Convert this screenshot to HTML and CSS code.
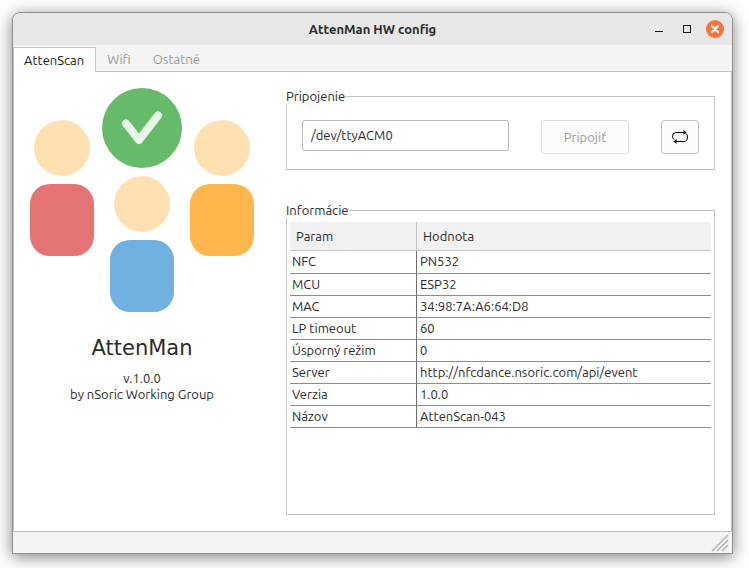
FILE: index.html
```
<!DOCTYPE html>
<html lang="sk">
<head>
  <meta charset="UTF-8">
  <title>AttenMan HW config</title>
  <link rel="stylesheet" href="styles.css">
</head>
<body>

  <div class="window">
    <header class="titlebar">
      <h1>AttenMan HW config</h1>
      <div class="window-buttons">
        <button class="win-btn" type="button" aria-label="Minimalizovať">
          <svg width="18" height="18" viewBox="0 0 18 18"><path d="M5 11.5h8" stroke="#1a1a1a" fill="none"/></svg>
        </button>
        <button class="win-btn" type="button" aria-label="Maximalizovať">
          <svg width="18" height="18" viewBox="0 0 18 18"><rect x="5.5" y="5.5" width="7" height="7" stroke="#1a1a1a" fill="none"/></svg>
        </button>
        <button class="win-btn" type="button" aria-label="Zavrieť">
          <svg width="18" height="18" viewBox="0 0 18 18"><circle cx="9" cy="9" r="9" fill="#ff7139"/><path d="M6 6l6 6M12 6l-6 6" stroke="#fff" stroke-width="2.4" stroke-linecap="round"/></svg>
        </button>
      </div>
    </header>

    <nav class="tabs">
      <button class="tab active" type="button">AttenScan</button>
      <button class="tab" type="button">Wifi</button>
      <button class="tab" type="button">Ostatné</button>
    </nav>

    <main class="page">
      <section class="about">
        <svg class="logo" viewBox="0 0 224 224" aria-hidden="true">
          <circle cx="112" cy="40" r="40" fill="#66bb6a"/>
          <path d="M96 35.5l13 16.5 19-24.5" fill="none" stroke="#e8f5e9" stroke-width="8" stroke-linecap="round" stroke-linejoin="round"/>
          <g fill="#ffe0b2">
            <circle cx="32" cy="60" r="28"/>
            <circle cx="192" cy="60" r="28"/>
            <circle cx="112" cy="116" r="28"/>
          </g>
          <rect x="0" y="96" width="64" height="72" rx="20" fill="#e57373"/>
          <rect x="160" y="96" width="64" height="72" rx="20" fill="#ffb74d"/>
          <rect x="80" y="152" width="64" height="72" rx="20" fill="#70b1e2"/>
        </svg>
        <h2>AttenMan</h2>
        <p>v.1.0.0<br>by nSoric Working Group</p>
      </section>

      <section class="device">
        <fieldset class="group">
          <legend>Pripojenie</legend>
          <div class="connect">
            <input class="port" type="text" value="/dev/ttyACM0" aria-label="Port">
            <button class="btn" type="button" disabled>Pripojiť</button>
            <button class="btn btn-icon" type="button" aria-label="Obnoviť">
              <svg width="18" height="16" viewBox="0 0 18 16">
                <path d="M3 10.5Q1.500 9.500 1.500 7.500Q1.500 3.500 5 3.500H13M15 4.500Q16.500 5.500 16.500 8Q16.500 12.500 13 12.500H5" fill="none" stroke="#000"/>
                <path d="M12.500 1L15.500 3.500L12.500 6zM5.500 10L2.500 12.500L5.500 15z"/>
              </svg>
            </button>
          </div>
        </fieldset>

        <fieldset class="group group-info">
          <legend>Informácie</legend>
          <table>
            <thead>
              <tr><th>Param</th><th>Hodnota</th></tr>
            </thead>
            <tbody>
              <tr><td>NFC</td><td>PN532</td></tr>
              <tr><td>MCU</td><td>ESP32</td></tr>
              <tr><td>MAC</td><td>34:98:7A:A6:64:D8</td></tr>
              <tr><td>LP timeout</td><td>60</td></tr>
              <tr><td>Úsporný režim</td><td>0</td></tr>
              <tr><td>Server</td><td>http://nfcdance.nsoric.com/api/event</td></tr>
              <tr><td>Verzia</td><td>1.0.0</td></tr>
              <tr><td>Názov</td><td>AttenScan-043</td></tr>
            </tbody>
          </table>
        </fieldset>
      </section>
    </main>

    <footer class="statusbar">
      <svg width="18" height="18" viewBox="0 0 18 18" aria-hidden="true"><path d="M1 17L17 1M6 17L17 6M11 17l6-6" stroke="#b0b0b0" stroke-width="1.5"/></svg>
    </footer>
  </div>

</body>
</html>
```
FILE: styles.css
```
* {
  box-sizing: border-box;
}

body {
  margin: 0;
  padding: 12px 16px 14px 12px;
  min-height: 100vh;
  display: flex;
  background: #fff;
  color: #2b2b2b;
  font-family: Ubuntu, "Noto Sans", sans-serif;
  font-size: 13px;
  line-height: 16px;
}

button, input {
  font: inherit;
  color: inherit;
}

.window {
  flex: 1;
  display: flex;
  flex-direction: column;
  border: 1px solid #8f8f8f;
  border-radius: 8px 8px 0 0;
  background: #f4f4f4;
  box-shadow: 0 3px 16px rgba(0, 0, 0, 0.5);
}

.titlebar {
  display: grid;
  grid-template-columns: 1fr auto 1fr;
  align-items: center;
  height: 32px;
  padding: 0 8px;
  background: #e7e7e7;
  border-radius: 7px 7px 0 0;
}

.titlebar h1 {
  grid-column: 2;
  margin: 0;
  font-size: 13px;
  font-weight: 600;
}

.window-buttons {
  display: flex;
  justify-content: flex-end;
  gap: 10px;
}

.win-btn {
  display: flex;
  padding: 0;
  border: none;
  background: none;
}

.tabs {
  display: flex;
  padding-top: 2px;
  border-bottom: 1px solid #c2c2c2;
}

.tab {
  height: 24px;
  padding: 0 11px;
  border: none;
  background: none;
  color: #999;
}

.tab.active {
  height: 25px;
  margin-bottom: -1px;
  padding: 0 11px 0 10px;
  border: 1px solid #c2c2c2;
  border-bottom: none;
  background: #fff;
  color: #1a1a1a;
}

.page {
  flex: 1;
  display: flex;
  gap: 32px;
  padding: 16px;
  border: 1px solid #c2c2c2;
  border-top: none;
  background: #fff;
}

.about {
  flex: 0 0 224px;
  text-align: center;
}

.logo {
  display: block;
  width: 100%;
}

.about h2 {
  margin: 24px 0 10px;
  font-family: "DejaVu Sans", sans-serif;
  font-size: 21px;
  font-weight: 400;
  line-height: 24px;
}

.about p {
  margin: 0;
}

.device {
  flex: 1;
  min-width: 0;
  display: flex;
  flex-direction: column;
  gap: 32px;
}

.group {
  min-width: 0;
  margin: 0;
  padding: 16px 15px 15px;
  border: 1px solid #c2c2c2;
}

.group legend {
  margin-left: -16px;
  padding: 0;
  background: #fff;
}

.connect {
  display: flex;
  align-items: flex-start;
  gap: 32px;
}

.port {
  flex: 1;
  min-width: 0;
  height: 31px;
  padding: 0 8px 2px;
  border: 1px solid #b8b8b8;
  border-radius: 3px;
  background: #fff;
}

.btn {
  width: 88px;
  height: 34px;
  border: 1px solid #c2c2c2;
  border-radius: 3px;
  background: #fafafa;
}

.btn:disabled {
  border-color: #dedede;
  background: #fcfcfc;
  color: #999;
}

.btn-icon {
  display: flex;
  align-items: center;
  justify-content: center;
  width: 38px;
  padding: 0;
}

.group-info {
  flex: 1;
  padding: 4px 3px;
}

.group-info legend {
  margin-left: -4px;
}

table {
  width: 100%;
  border-spacing: 0;
  table-layout: fixed;
}

th, td {
  text-align: left;
  font-weight: 400;
}

th {
  height: 29px;
  padding: 0 6px;
  background: #f1f1f1;
  border-bottom: 1px solid #c2c2c2;
}

th:first-child {
  width: 127px;
  border-right: 1px solid #c2c2c2;
}

td {
  height: 22px;
  padding: 0 3px 2px;
  border-bottom: 1px solid #8c8c8c;
}

td:first-child {
  padding-left: 2px;
  border-right: 1px solid #6e6e6e;
}

tbody tr:first-child td {
  height: 23px;
}

.statusbar {
  display: flex;
  justify-content: flex-end;
  align-items: flex-end;
  height: 21px;
  padding: 0 3px 1px;
}
```
